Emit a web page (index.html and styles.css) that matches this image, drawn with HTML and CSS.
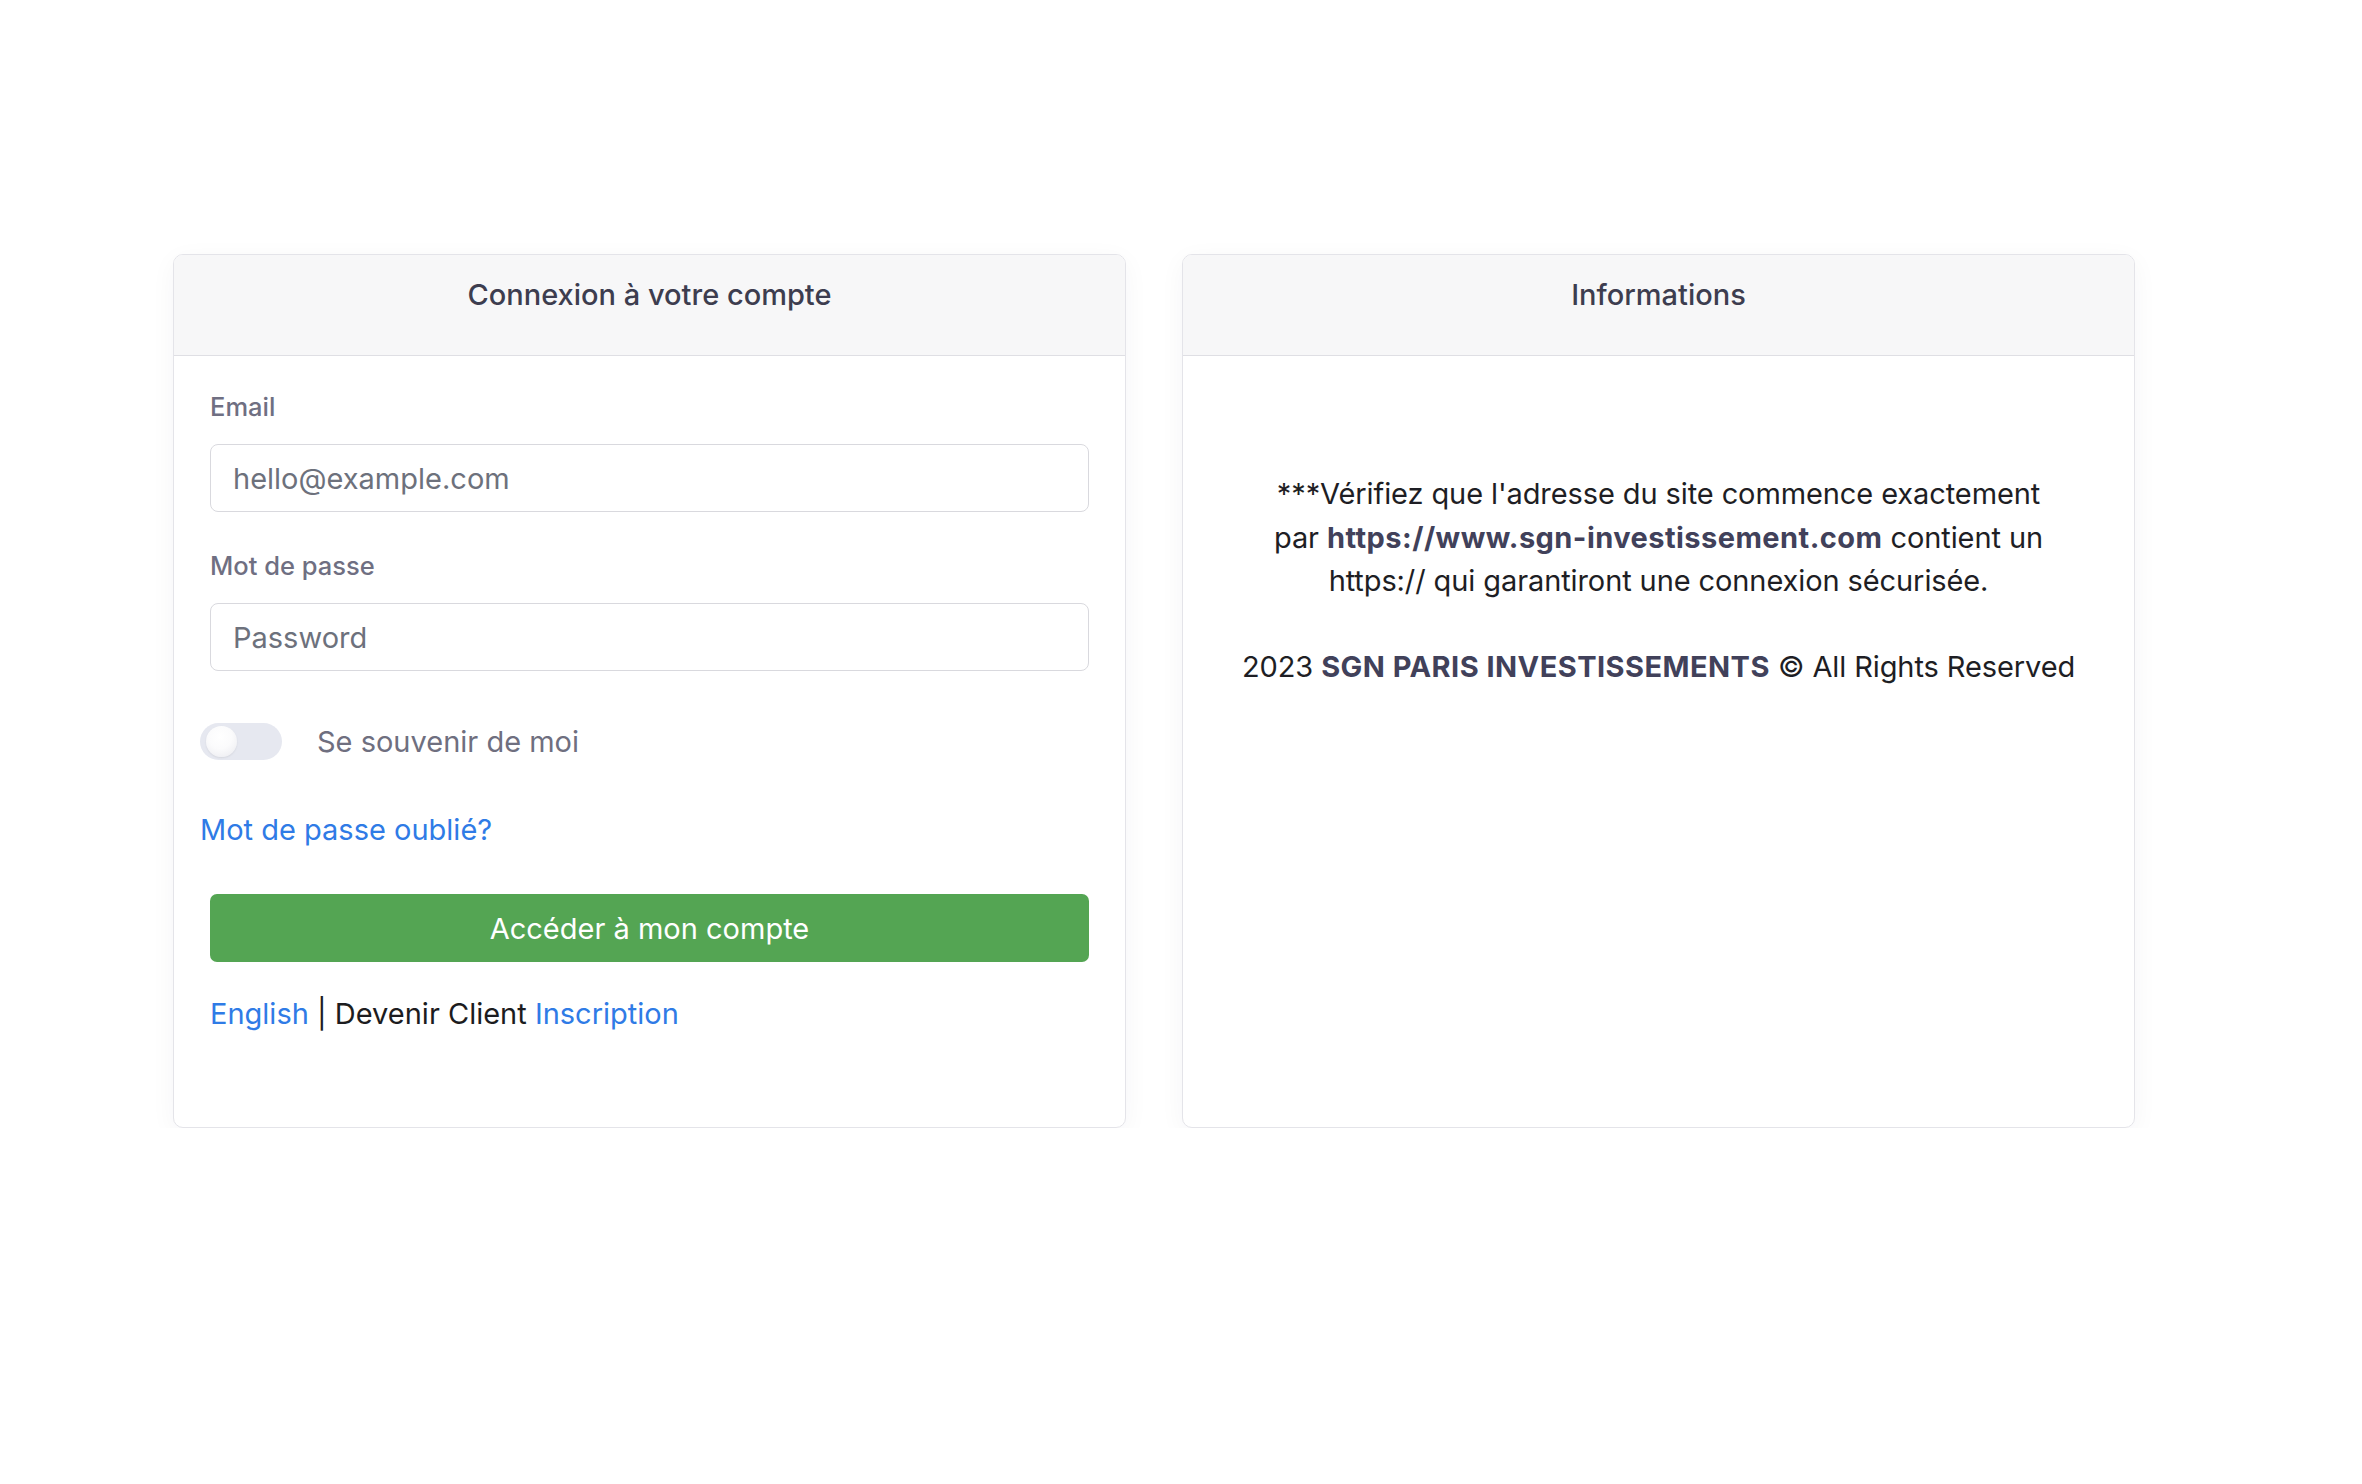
FILE: index.html
```html
<!DOCTYPE html>
<html lang="fr">
<head>
<meta charset="utf-8">
<title>Connexion à votre compte</title>
<link rel="stylesheet" href="styles.css">
</head>
<body>
<main class="page">
  <section class="card">
    <header class="card-header">
      <h2 class="card-title">Connexion à votre compte</h2>
    </header>
    <div class="card-body login-body">
      <form class="login-form">
        <div class="field">
          <label class="field-label" for="email">Email</label>
          <input class="field-input" id="email" type="email" placeholder="hello@example.com">
        </div>
        <div class="field">
          <label class="field-label" for="password">Mot de passe</label>
          <input class="field-input" id="password" type="password" placeholder="Password">
        </div>
        <div class="remember">
          <span class="switch"><span class="switch-knob"></span></span>
          <span class="remember-text">Se souvenir de moi</span>
        </div>
        <a class="forgot" href="#">Mot de passe oublié?</a>
        <button class="submit" type="button">Accéder à mon compte</button>
        <p class="extra"><a class="link" href="#">English</a> | Devenir Client <a class="link" href="#">Inscription</a></p>
      </form>
    </div>
  </section>
  <section class="card">
    <header class="card-header">
      <h2 class="card-title">Informations</h2>
    </header>
    <div class="card-body info-body">
      <p class="info-text">***Vérifiez que l'adresse du site commence exactement<br>par <strong class="strong">https://www.sgn-investissement.com</strong> contient un<br>https:// qui garantiront une connexion sécurisée.</p>
      <p class="info-text">2023 <strong class="strong">SGN PARIS INVESTISSEMENTS</strong> © All Rights Reserved</p>
    </div>
  </section>
</main>
</body>
</html>
```
FILE: styles.css
```css
* {
  box-sizing: border-box;
}

html,
body {
  margin: 0;
  background: #ffffff;
}

body {
  font-family: Inter, "Noto Sans", "Liberation Sans", sans-serif;
  font-size: 29px;
  line-height: 1.5;
  color: #1f1f24;
}

.page {
  display: grid;
  grid-template-columns: 953px 953px;
  column-gap: 56px;
  align-items: stretch;
  padding: 254px 0 0 173px;
}

.card {
  display: flex;
  flex-direction: column;
  background: #ffffff;
  border: 1px solid #e4e4e9;
  border-radius: 10px;
  box-shadow: 0 6px 26px rgba(40, 40, 80, 0.045);
  overflow: hidden;
}

.card-header {
  background: #f7f7f8;
  border-bottom: 1px solid #dfdfe4;
  padding: 17px 20px 38px;
  text-align: center;
}

.card-title {
  margin: 0;
  font-size: 29px;
  line-height: 45px;
  font-weight: 500;
  color: #3d3d4f;
}

.card-body {
  flex: 1;
}

.login-body {
  padding: 31px 36px 91px;
}

.login-form {
  display: flex;
  flex-direction: column;
  margin: 0;
}

.field {
  display: flex;
  flex-direction: column;
}

.field + .field {
  margin-top: 34px;
}

.field-label {
  font-size: 25.5px;
  line-height: 39px;
  font-weight: 500;
  color: #6f6f82;
  margin-bottom: 18px;
}

.field-input {
  display: block;
  width: 100%;
  height: 68px;
  padding: 0 22px;
  border: 1px solid #d9d9de;
  border-radius: 8px;
  background: #ffffff;
  font-family: inherit;
  font-size: 29px;
  color: #3d3d4f;
  outline: none;
}

.field-input::placeholder {
  color: #6d717c;
  opacity: 1;
}

.remember {
  display: flex;
  align-items: center;
  gap: 35px;
  height: 43.5px;
  margin: 49px 0 0 -10px;
}

.switch {
  position: relative;
  flex: none;
  width: 82px;
  height: 37px;
  border-radius: 19px;
  background: #e6e8f0;
}

.switch-knob {
  position: absolute;
  left: 6px;
  top: 3px;
  width: 31px;
  height: 31px;
  border-radius: 50%;
  background: radial-gradient(circle at 45% 35%, #ffffff 0%, #fbfbfc 45%, #e9e9ee 100%);
  box-shadow: 0 1px 2px rgba(0, 0, 0, 0.08);
}

.remember-text {
  color: #6f6f7f;
  line-height: 43.5px;
}

.forgot {
  display: block;
  align-self: flex-start;
  margin: 44.5px 0 0 -10px;
  line-height: 43.5px;
  color: #2f7be6;
  text-decoration: none;
}

.submit {
  display: block;
  width: 100%;
  height: 68px;
  margin-top: 42.5px;
  border: none;
  border-radius: 7px;
  background: #54a553;
  color: #ffffff;
  font-family: inherit;
  font-size: 29px;
  font-weight: 400;
  cursor: pointer;
}

.extra {
  margin: 30px 0 0;
  line-height: 43.5px;
  color: #1c1c20;
}

.link {
  color: #2f7be6;
  text-decoration: none;
}

.info-body {
  padding: 116px 20px 40px;
  text-align: center;
}

.info-text {
  margin: 0 0 42px;
  line-height: 43.5px;
  color: #1e1e24;
  letter-spacing: -0.1px;
}

.strong {
  font-weight: 700;
  color: #41415a;
  letter-spacing: 0.45px;
}
```
